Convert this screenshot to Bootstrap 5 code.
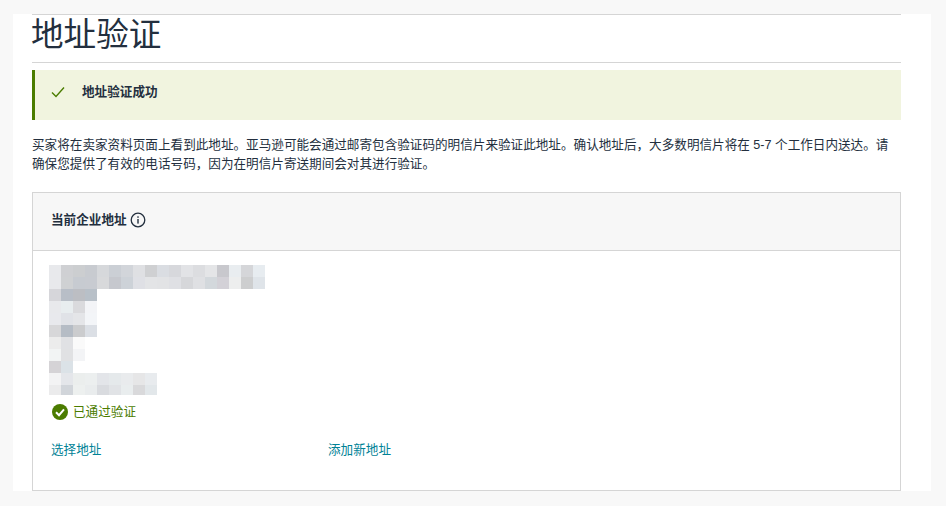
<!DOCTYPE html>
<html lang="zh-CN">
<head>
<meta charset="utf-8">
<title>地址验证</title>
<link href="https://cdn.jsdelivr.net/npm/bootstrap@5.3.0/dist/css/bootstrap.min.css" rel="stylesheet">
<style>
html,body{height:100%;overflow:hidden}
body{background:#f8f8f8;color:#0f1111;font-family:"Liberation Sans","Noto Sans CJK SC",sans-serif;font-size:12.6px;line-height:20px}
.sheet{margin:14px 15px 0 13px;height:477px;background:#fff;padding:0 30px 0 19px;overflow:hidden}
.page-title{border-top:1px solid #d5d5d5;border-bottom:1px solid #d5d5d5;height:49px;font-size:32.6px;line-height:39px;font-weight:400;margin:0 0 7px;text-indent:-1px;color:#232f3e}
.ok-alert{height:50px;background:#f1f4df;border-left:3px solid #4b7c00;padding:0 0 6px 16px;gap:17px;margin-bottom:15px;font-weight:700;color:#232f3e}
.intro{margin:0 0 17px;padding:1px 9px 0 0;height:40px;line-height:19px;color:#232f3e}
.addr-card{height:299px;border:1px solid #d5d5d5;border-radius:0}
.addr-head{height:58px;background:#f7f7f7;border-bottom:1px solid #d5d5d5;padding:0 18px 4px;font-weight:700;gap:3px;color:#232f3e}
.addr-body{padding:14px 18px 0 16px}
.mosaic{display:block;margin-bottom:7px}
.verified{color:#4b7c00;gap:5px;padding-left:3px;margin-bottom:18px}
.addr-links{display:grid;grid-template-columns:277px auto;justify-content:start;padding-left:2px}
.addr-links a{color:#008296;text-decoration:none}
</style>
</head>
<body>
<main class="sheet">
  <h1 class="page-title">地址验证</h1>
  <div class="ok-alert d-flex align-items-center">
    <svg width="14" height="12" viewBox="0 0 14 12" aria-hidden="true"><path d="M1 6.5 5 10.5 13 1.5" fill="none" stroke="#4b7c00" stroke-width="1.4"/></svg>
    <span>地址验证成功</span>
  </div>
  <p class="intro">买家将在卖家资料页面上看到此地址。亚马逊可能会通过邮寄包含验证码的明信片来验证此地址。确认地址后，大多数明信片将在 5-7 个工作日内送达。请确保您提供了有效的电话号码，因为在明信片寄送期间会对其进行验证。</p>
  <section class="card addr-card">
    <div class="addr-head d-flex align-items-center">
      <span>当前企业地址</span>
      <svg width="16" height="16" viewBox="0 0 16 16" aria-hidden="true"><circle cx="8" cy="8" r="6.8" fill="none" stroke="#232f3e" stroke-width="1.3"/><rect x="7.3" y="7" width="1.4" height="4.6" fill="#232f3e"/><rect x="7.3" y="4.3" width="1.4" height="1.5" fill="#232f3e"/></svg>
    </div>
    <div class="addr-body">
      <svg class="mosaic" width="216" height="130" viewBox="0 0 216 130" aria-hidden="true" id="mz"></svg>
      <div class="verified d-flex align-items-center">
        <svg width="16" height="16" viewBox="0 0 16 16" aria-hidden="true"><circle cx="8" cy="8" r="8" fill="#4b7c00"/><path d="M4 8.3 7 11.2 12 5.4" fill="none" stroke="#fff" stroke-width="2"/></svg>
        <span>已通过验证</span>
      </div>
      <div class="addr-links"><a href="#">选择地址</a><a href="#">添加新地址</a></div>
    </div>
  </section>
</main>
<script>
const rows=[
"e8e9ec cfd0d3 ccced0 c8cbd0 d6d8db cbcfd5 d2d5da dfe0e3 cfd0d2 dadde2 d7d8dc e2e3e6 dcdde0 e4e5e7 c8c8cd e9edf0 d5d6d9 e7ecf0",
"e8e9ec cfd1d3 c7cbd1 c8cbd1 d8d9db c6c8ce cdd2d8 dfe0e5 e3e4e6 e2e3e5 dfe0e4 d6d7da dfe0e3 d3d8dc d3d1d7 edeeee cdcecf dfe4e9",
"d6d6da b8bec7 bcbec3 b8c0c8",
"e8e9ec e8edef dadadd f3f4f7",
"e8e9ed e0e2e7 e4e5e8 f3f5f8",
"d7d7d9 b5bcc5 cbccce dbdfe5",
"ececec e0e1e4 fafafa",
"f2f4f4 e0e1e3 f3f4f6",
"d5d3d6 dbe2e7",
"f3f3f4 e4e6ea ebeeed ecefef e3e5e9 e5e9eb e9ebed e6e6e7 e8ebee",
"ebebec d1d5da edf0ef e9eced d9dbdf e1e3e6 e9edee d9d9db e2e7ea"];
document.getElementById('mz').innerHTML=rows.map((r,y)=>r.split(' ').map((c,x)=>`<rect x="${x*12}" y="${y*12}" width="12" height="${y==10?10:12}" fill="#${c}"/>`).join('')).join('');
</script>
<script src="https://cdn.jsdelivr.net/npm/bootstrap@5.3.0/dist/js/bootstrap.bundle.min.js"></script>
</body>
</html>
